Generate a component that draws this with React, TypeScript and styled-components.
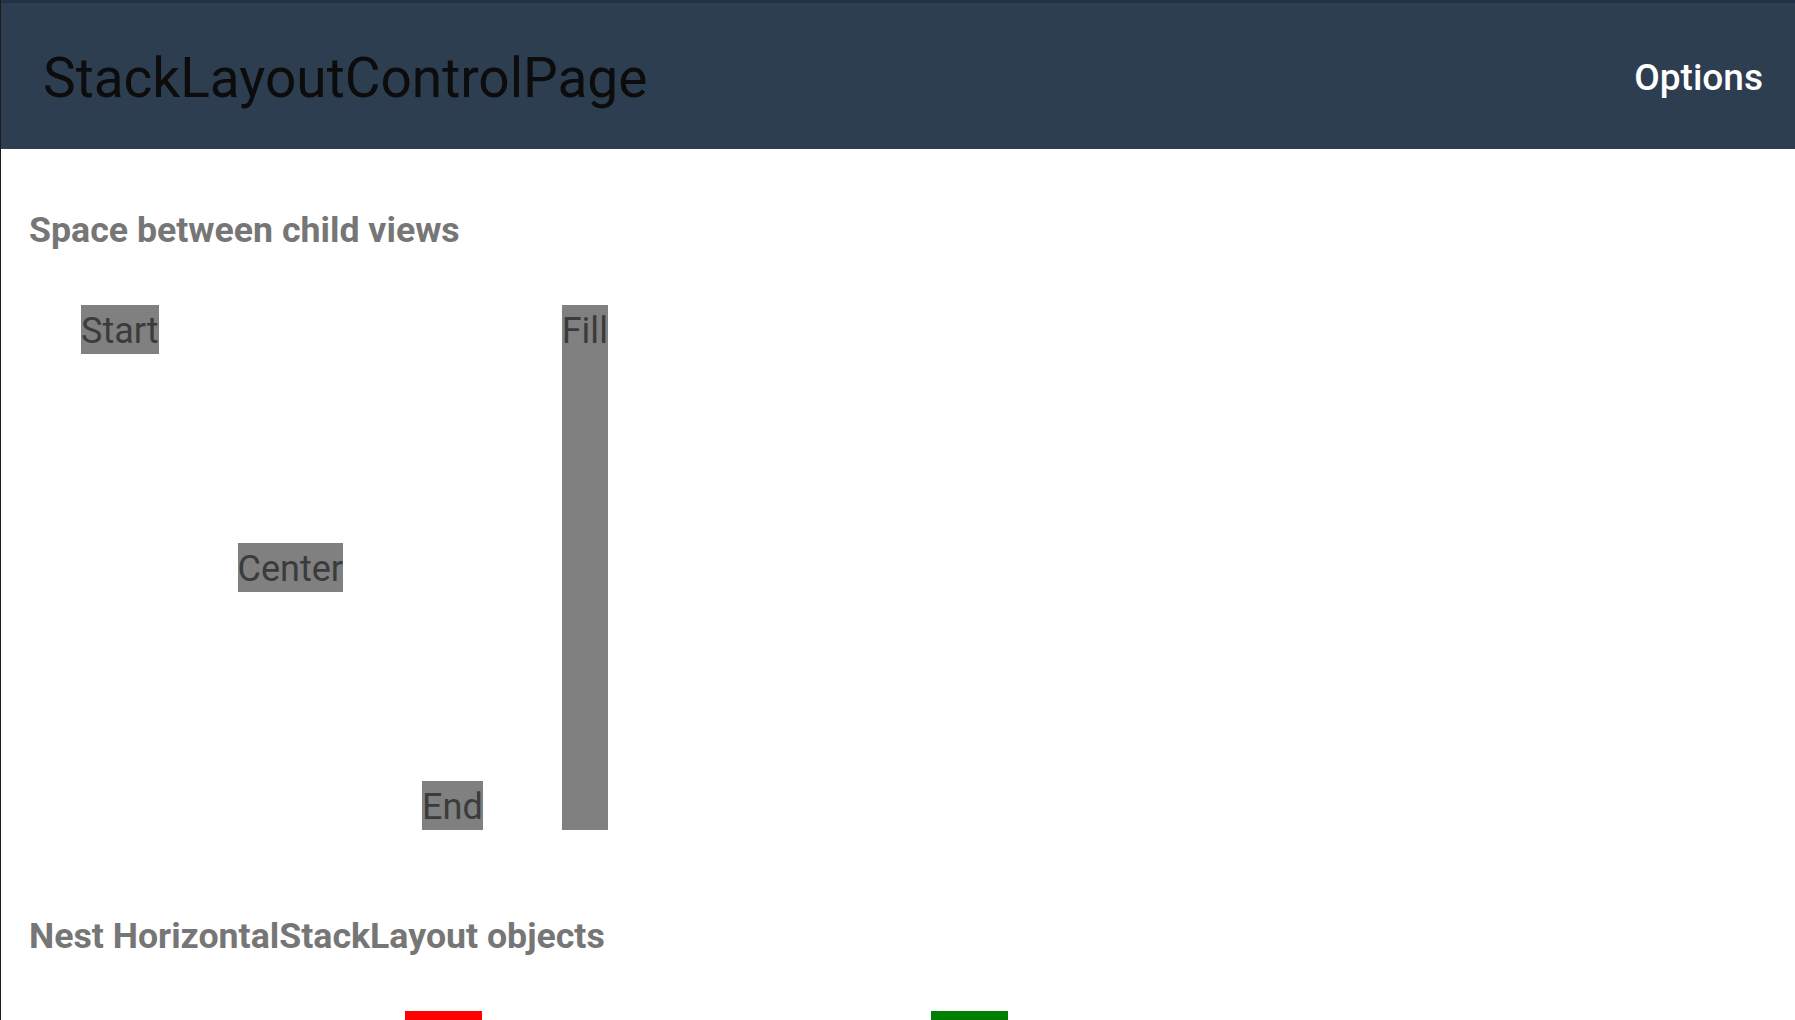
import React from "react";
import styled, { createGlobalStyle } from "styled-components";

const Global = createGlobalStyle`
  html, body { margin: 0; padding: 0; background: #ffffff; }
  * { box-sizing: border-box; }
`;

const Screen = styled.div`
  height: 100vh;
  overflow: hidden;
  background: #ffffff;
  border-left: 1px solid #1c1c1c;
  display: flex;
  flex-direction: column;
  font-family: Roboto, "Noto Sans", sans-serif;
`;

const Toolbar = styled.header`
  flex: 0 0 149px;
  border-top: 3px solid #1f3249;
  background: #2d3e50;
  display: flex;
  align-items: center;
  justify-content: space-between;
  padding: 0 32px 0 42px;
`;

const Title = styled.h1`
  margin: 4px 0 0;
  font-size: 55px;
  font-weight: 400;
  color: #0c0c0c;
`;

const Action = styled.span`
  margin-top: 3px;
  font-size: 37px;
  font-weight: 500;
  color: #ffffff;
`;

const Content = styled.main`
  padding: 58px 0 0 28px;
  display: flex;
  flex-direction: column;
`;

const Heading = styled.h2<{ $gap: number }>`
  margin: ${(p) => p.$gap}px 0 0;
  font-size: 35.7px;
  line-height: 46px;
  font-weight: 700;
  color: #767676;
`;

const AlignRow = styled.div`
  margin-top: 52px;
  height: 525px;
  padding-left: 52px;
  display: flex;
  gap: 79px;
`;

type Align = "flex-start" | "center" | "flex-end" | "stretch";

const Chip = styled.span<{ $align: Align }>`
  align-self: ${(p) => p.$align};
  background: #808080;
  color: #3b3b3b;
  font-size: 36px;
  line-height: 46px;
  padding-top: 3px;
  white-space: nowrap;
`;

const NestRow = styled.div`
  margin-top: 52px;
  padding-left: 376px;
  display: flex;
  align-items: flex-start;
  gap: 449px;
`;

const Swatches = styled.div`
  display: flex;
  flex-direction: column;
  gap: 16px;
`;

const Swatch = styled.div<{ $color: string }>`
  width: 77px;
  height: 77px;
  background: ${(p) => p.$color};
`;

const chips: { text: string; align: Align }[] = [
  { text: "Start", align: "flex-start" },
  { text: "Center", align: "center" },
  { text: "End", align: "flex-end" },
  { text: "Fill", align: "stretch" },
];

const groups = [
  { id: "primary", colors: ["#ff0000", "#ffff00", "#0000ff"] },
  { id: "secondary", colors: ["#008000", "#ffa500", "#800080"] },
];

export default function App() {
  return (
    <>
      <Global />
      <Screen>
        <Toolbar>
          <Title>StackLayoutControlPage</Title>
          <Action>Options</Action>
        </Toolbar>
        <Content>
          <Heading $gap={0}>Space between child views</Heading>
          <AlignRow>
            {chips.map((c) => (
              <Chip key={c.text} $align={c.align}>
                {c.text}
              </Chip>
            ))}
          </AlignRow>
          <Heading $gap={83}>Nest HorizontalStackLayout objects</Heading>
          <NestRow>
            {groups.map((g) => (
              <Swatches key={g.id}>
                {g.colors.map((c) => (
                  <Swatch key={c} $color={c} />
                ))}
              </Swatches>
            ))}
          </NestRow>
        </Content>
      </Screen>
    </>
  );
}
